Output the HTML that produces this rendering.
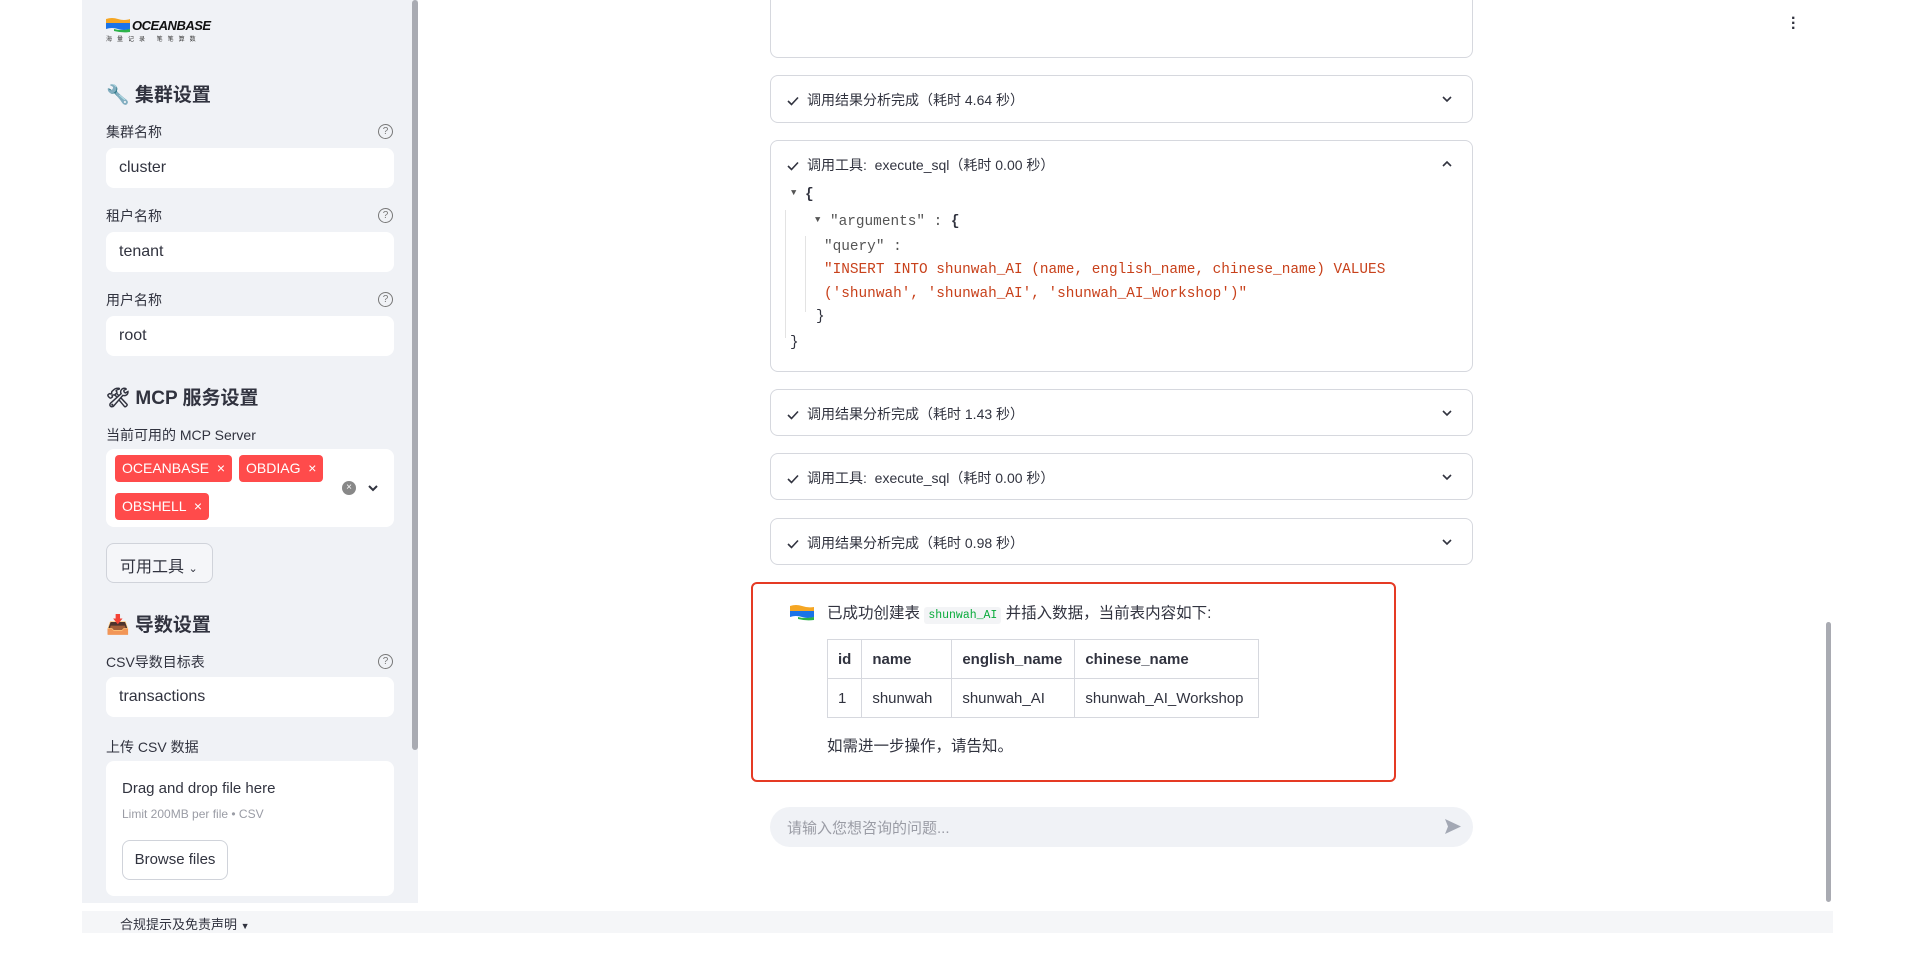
<!DOCTYPE html>
<html><head><meta charset="utf-8"><style>
*{box-sizing:border-box;margin:0;padding:0}
body{width:1920px;height:953px;position:relative;background:#fff;font-family:"Liberation Sans","Noto Sans CJK SC",sans-serif;color:#31333f;overflow:hidden}
.a{position:absolute}
#side{left:82px;top:0;width:336px;height:903px;background:#f0f2f6}
.lbl{font-size:14px;color:#31333f}
.inp{left:106px;width:288px;height:40px;background:#fff;border-radius:8px;font-size:16px;padding:11px 13px;color:#31333f}
.help{left:378px;width:15px;height:15px;border:1.3px solid #777;border-radius:50%;font-size:10px;text-align:center;line-height:13px;color:#777}
.h3{font-size:19px;font-weight:bold;color:#31333f}
.tag{height:27px;background:#ff4b4b;color:#fff;border-radius:4px;font-size:14px;padding:5px 7px;white-space:nowrap}
.exp{left:770px;width:703px;border:1px solid #d6d8de;border-radius:8px;background:#fff}
.eh{position:absolute;left:16px;font-size:14px;color:#31333f;white-space:nowrap}
.eh svg{vertical-align:-1px;margin-right:8px}
.chev{position:absolute;right:19px}
.mono{font-family:"Liberation Mono","Noto Sans CJK SC",monospace;font-size:14.4px;white-space:nowrap}
.k{color:#555}
.s{color:#c8411b}
td,th{border:1px solid #d6d8de;padding:0 10px;height:39px;font-size:15px;text-align:left;color:#31333f}
</style></head><body>
<div class="a" id="side"></div>
<div class="a" style="left:412px;top:0;width:6px;height:750px;background:#a9abb2;border-radius:3px"></div>
<svg class="a" style="left:106px;top:17px" width="24" height="16"><path d="M0 2 Q6 0 12 2 T24 2 V6 H0Z" fill="#f5a623"/><path d="M0 6 H24 V12 Q18 14 12 12 T0 12Z" fill="#1a73e8"/><path d="M8 12 Q14 14 24 12 V15 Q16 16 8 14Z" fill="#2db34a"/></svg>
<div class="a" style="left:132px;top:18px;font-size:13px;font-weight:bold;font-style:italic;letter-spacing:-0.5px;color:#111">OCEANBASE</div>
<div class="a" style="left:106px;top:34px;font-size:6px;color:#333;letter-spacing:5px;white-space:nowrap">海量记录 笔笔算数</div>
<div class="a h3" style="left:106px;top:80px">🔧 集群设置</div>
<div class="a lbl" style="left:106px;top:122px">集群名称</div><div class="a help" style="top:124px">?</div>
<div class="a inp" style="top:148px">cluster</div>
<div class="a lbl" style="left:106px;top:206px">租户名称</div><div class="a help" style="top:208px">?</div>
<div class="a inp" style="top:232px">tenant</div>
<div class="a lbl" style="left:106px;top:290px">用户名称</div><div class="a help" style="top:292px">?</div>
<div class="a inp" style="top:316px">root</div>
<div class="a h3" style="left:106px;top:383px">🛠 MCP 服务设置</div>
<div class="a lbl" style="left:106px;top:425px">当前可用的 MCP Server</div>
<div class="a" style="left:106px;top:449px;width:288px;height:78px;background:#fff;border-radius:8px"></div>
<div class="a tag" style="left:115px;top:455px">OCEANBASE &nbsp;×</div>
<div class="a tag" style="left:239px;top:455px">OBDIAG &nbsp;×</div>
<div class="a tag" style="left:115px;top:493px">OBSHELL &nbsp;×</div>
<div class="a" style="left:342px;top:481px;width:14px;height:14px;border-radius:50%;background:#888;color:#fff;font-size:10px;text-align:center;line-height:14px">×</div>
<svg class="a" style="left:367px;top:483px" width="12" height="10"><path d="M2 3 L6 7 L10 3" stroke="#31333f" stroke-width="2" fill="none"/></svg>
<div class="a" style="left:106px;top:543px;width:107px;height:40px;border:1px solid #d0d3da;border-radius:8px;background:#f5f6f9;font-size:16px;padding:9px 13px;white-space:nowrap">可用工具 <span style="font-size:11px">⌄</span></div>
<div class="a h3" style="left:106px;top:610px">📥 导数设置</div>
<div class="a lbl" style="left:106px;top:652px">CSV导数目标表</div><div class="a help" style="top:654px">?</div>
<div class="a inp" style="top:677px">transactions</div>
<div class="a lbl" style="left:106px;top:737px">上传 CSV 数据</div>
<div class="a" style="left:106px;top:761px;width:288px;height:135px;background:#fff;border-radius:8px"></div>
<div class="a" style="left:122px;top:780px;font-size:15px">Drag and drop file here</div>
<div class="a" style="left:122px;top:807px;font-size:12px;color:#9a9ca5">Limit 200MB per file • CSV</div>
<div class="a" style="left:122px;top:840px;width:106px;height:40px;border:1px solid #d0d3da;border-radius:8px;font-size:15px;padding:10px 0;text-align:center;white-space:nowrap">Browse files</div>
<div class="a" style="left:82px;top:911px;width:1751px;height:22px;background:#f5f6f8"></div>
<div class="a" style="left:120px;top:914px;font-size:13px">合规提示及免责声明 <span style="font-size:9px">▼</span></div>
<div class="a" style="left:1791px;top:16px;font-size:16px;font-weight:bold;line-height:5px;color:#31333f">·<br>·<br>·</div>
<div class="a" style="left:1826px;top:622px;width:5px;height:280px;background:#a9abb2;border-radius:3px"></div>
<div class="a exp" style="top:-10px;height:68px"></div>
<div class="a exp" style="top:75px;height:48px"><span class="eh" style="top:14px"><svg width="12" height="10"><path d="M1 5 L4.5 8.5 L11 1.5" stroke="#31333f" stroke-width="1.6" fill="none"/></svg>调用结果分析完成（耗时 4.64 秒）</span><svg class="chev" style="top:18px" width="12" height="10"><path d="M2 3 L6 7 L10 3" stroke="#31333f" stroke-width="1.6" fill="none"/></svg></div>
<div class="a exp" style="top:140px;height:232px"><span class="eh" style="top:14px"><svg width="12" height="10"><path d="M1 5 L4.5 8.5 L11 1.5" stroke="#31333f" stroke-width="1.6" fill="none"/></svg>调用工具: &nbsp;execute_sql（耗时 0.00 秒）</span><svg class="chev" style="top:18px" width="12" height="10"><path d="M2 7 L6 3 L10 7" stroke="#31333f" stroke-width="1.6" fill="none"/></svg></div>
<div class="a" style="left:785px;top:210px;width:1px;height:128px;background:#e3e3e3"></div>
<div class="a" style="left:805px;top:236px;width:1px;height:76px;background:#e3e3e3"></div>
<div class="a mono" style="left:791px;top:188px;font-size:9px;color:#555">▼</div>
<div class="a mono" style="left:805px;top:187px;font-weight:bold">{</div>
<div class="a mono" style="left:815px;top:215px;font-size:9px;color:#555">▼</div>
<div class="a mono k" style="left:830px;top:214px">"arguments" : <b style="color:#31333f">{</b></div>
<div class="a mono k" style="left:824px;top:239px">"query" :</div>
<div class="a mono s" style="left:824px;top:262px">"INSERT INTO shunwah_AI (name, english_name, chinese_name) VALUES</div>
<div class="a mono s" style="left:824px;top:286px">('shunwah', 'shunwah_AI', 'shunwah_AI_Workshop')"</div>
<div class="a mono" style="left:816px;top:309px">}</div>
<div class="a mono" style="left:790px;top:335px">}</div>
<div class="a exp" style="top:389px;height:47px"><span class="eh" style="top:14px"><svg width="12" height="10"><path d="M1 5 L4.5 8.5 L11 1.5" stroke="#31333f" stroke-width="1.6" fill="none"/></svg>调用结果分析完成（耗时 1.43 秒）</span><svg class="chev" style="top:18px" width="12" height="10"><path d="M2 3 L6 7 L10 3" stroke="#31333f" stroke-width="1.6" fill="none"/></svg></div>
<div class="a exp" style="top:453px;height:47px"><span class="eh" style="top:14px"><svg width="12" height="10"><path d="M1 5 L4.5 8.5 L11 1.5" stroke="#31333f" stroke-width="1.6" fill="none"/></svg>调用工具: &nbsp;execute_sql（耗时 0.00 秒）</span><svg class="chev" style="top:18px" width="12" height="10"><path d="M2 3 L6 7 L10 3" stroke="#31333f" stroke-width="1.6" fill="none"/></svg></div>
<div class="a exp" style="top:518px;height:47px"><span class="eh" style="top:14px"><svg width="12" height="10"><path d="M1 5 L4.5 8.5 L11 1.5" stroke="#31333f" stroke-width="1.6" fill="none"/></svg>调用结果分析完成（耗时 0.98 秒）</span><svg class="chev" style="top:18px" width="12" height="10"><path d="M2 3 L6 7 L10 3" stroke="#31333f" stroke-width="1.6" fill="none"/></svg></div>
<div class="a" style="left:751px;top:582px;width:645px;height:200px;border:2px solid #e53a24;border-radius:6px"></div>
<svg class="a" style="left:790px;top:604px" width="24" height="17"><path d="M0 2 Q6 0 12 2 T24 3 V7 H0Z" fill="#f5a623"/><path d="M0 7 H24 V13 Q18 15 12 13 T0 13Z" fill="#1a73e8"/><path d="M8 13 Q14 15 24 13 V16 Q16 17 8 15Z" fill="#2db34a"/></svg>
<div class="a" style="left:827px;top:601px;font-size:15.5px;white-space:nowrap">已成功创建表 <span class="mono" style="font-size:11.5px;color:#09ab3b;background:#f3f4f6;padding:2px 4px;border-radius:3px">shunwah_AI</span> 并插入数据，当前表内容如下:</div>
<table class="a" style="left:827px;top:639px;border-collapse:collapse">
<tr><th style="width:34px">id</th><th style="width:90px">name</th><th style="width:123px">english_name</th><th style="width:184px">chinese_name</th></tr>
<tr><td>1</td><td>shunwah</td><td>shunwah_AI</td><td>shunwah_AI_Workshop</td></tr>
</table>
<div class="a" style="left:827px;top:734px;font-size:15.5px">如需进一步操作，请告知。</div>
<div class="a" style="left:770px;top:807px;width:703px;height:40px;border-radius:20px;background:#f0f2f6"></div>
<div class="a" style="left:787px;top:817px;font-size:15px;color:#9a9ca5">请输入您想咨询的问题...</div>
<svg class="a" style="left:1444px;top:818px" width="18" height="17"><path d="M1 1 L17 8.5 L1 16 L4 8.5Z" fill="#a3a8b4"/></svg>
</body></html>
